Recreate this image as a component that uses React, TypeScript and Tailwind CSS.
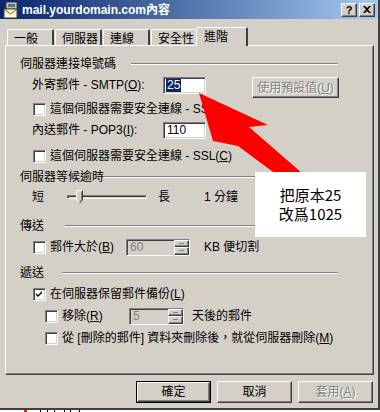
import { ReactNode } from 'react';

const sunken =
    'border border-t-[#808080] border-l-[#808080] border-b-white border-r-white shadow-[inset_1px_1px_0_#404040,inset_-1px_-1px_0_#d4d0c8]';
const raised =
    'border border-t-white border-l-white border-b-[#404040] border-r-[#404040] shadow-[inset_-1px_-1px_0_#808080,inset_1px_1px_0_#d4d0c8]';

const U = ({ children }: { children: ReactNode }) => <span className="underline underline-offset-1">{children}</span>;

const Check = ({ checked = false }: { checked?: boolean }) => (
    <div className={`h-[13px] w-[13px] shrink-0 bg-white ${sunken} flex items-center justify-center`}>
        {checked && (
            <svg width="7" height="7" viewBox="0 0 7 7">
                <path d="M0 2 L2 4 L6 0 L6 2 L2 6 L0 4 Z" fill="#000" />
            </svg>
        )}
    </div>
);

const Header = ({ label, lineStart }: { label: string; lineStart: number }) => (
    <div className="flex h-[16px] items-center pl-[14px]">
        <span className="shrink-0">{label}</span>
        <div className="flex w-full items-center">
            <div style={{ width: lineStart }} className="shrink-0" />
            <div className="h-[2px] flex-1 border-t border-t-[#808080] border-b border-b-white" />
            <div className="w-[35px] shrink-0" />
        </div>
    </div>
);

const Spin = ({ value, width }: { value: string; width: number }) => (
    <div style={{ width }} className={`flex h-[17px] items-stretch bg-[#d4d0c8] ${sunken}`}>
        <span className="flex-1 pl-[3px] leading-[15px] text-[#808080]">{value}</span>
        <div className="flex w-[15px] flex-col">
            {[0, 1].map((i) => (
                <div key={i} className={`flex h-[7.5px] items-center justify-center bg-[#d4d0c8] ${raised}`}>
                    <div className="h-px w-[5px] bg-[#808080]" />
                </div>
            ))}
        </div>
    </div>
);

const Tab = ({ label, active = false }: { label: string; active?: boolean }) =>
    active ? (
        <div className="relative z-10 -mb-px -ml-[2px] flex h-[19px] w-[52px] items-start rounded-t-[2px] border-l border-t border-l-white border-t-white border-r-2 border-r-[#404040] bg-[#d4d0c8] pl-[7px] pt-[1px]">
            {label}
        </div>
    ) : (
        <div className="ml-px flex h-[16px] w-[47px] items-start rounded-t-[2px] border-l border-t border-l-white border-t-white border-r-2 border-r-[#404040] pl-[6px] pt-[1px] first:ml-0">
            {label}
        </div>
    );

const Button = ({ label, main = false, disabled = false }: { label: ReactNode; main?: boolean; disabled?: boolean }) => (
    <div className={`${main ? 'border border-black' : ''} flex h-[22px] w-[75px]`}>
        <div
            className={`flex flex-1 items-center justify-center ${raised} ${
                disabled ? 'text-[#808080] [text-shadow:1px_1px_0_#fff]' : 'text-black'
            }`}
        >
            {label}
        </div>
    </div>
);

export default function App() {
    return (
        <div className="relative h-[412px] w-[380px] overflow-hidden bg-[#d4d0c8] font-['Liberation_Sans','Noto_Sans_CJK_TC',sans-serif] text-[12px] leading-[16px] text-black">
            <div className="h-[410px] border-r-2 border-r-[#404040] border-b-2 border-b-[#404040]">
                {/* title bar */}
                <div className="flex h-[19px] items-center bg-gradient-to-r from-[#0a246a] to-[#a6caf0] pl-[3px] pr-[3px]">
                    <svg width="17" height="16" viewBox="0 0 17 16">
                        <rect x="3" y="0" width="11" height="7" fill="#c0c0c0" stroke="#404040" strokeWidth="1" />
                        <rect x="5" y="2" width="7" height="3" fill="#607080" />
                        <rect x="1" y="7" width="13" height="9" fill="#fffbc8" stroke="#404040" strokeWidth="1" />
                        <path d="M1.5 7.5 L7.5 12 L13.5 7.5" fill="none" stroke="#606060" strokeWidth="1" />
                    </svg>
                    <span className="ml-[2px] font-bold text-white">mail.yourdomain.com內容</span>
                    <div className="flex-1" />
                    <div className={`flex h-[14px] w-[16px] items-center justify-center bg-[#d4d0c8] text-[11px] font-bold ${raised}`}>?</div>
                    <div className={`ml-[2px] flex h-[14px] w-[16px] items-center justify-center bg-[#d4d0c8] ${raised}`}>
                        <svg width="8" height="7" viewBox="0 0 8 7">
                            <path d="M0 0 L2 0 L4 2 L6 0 L8 0 L5 3.5 L8 7 L6 7 L4 5 L2 7 L0 7 L3 3.5 Z" fill="#000" />
                        </svg>
                    </div>
                </div>

                {/* tabs */}
                <div className="mt-[8px] flex h-[18px] items-end pl-[7px]">
                    <Tab label="一般" />
                    <Tab label="伺服器" />
                    <Tab label="連線" />
                    <Tab label="安全性" />
                    <Tab label="進階" active />
                </div>

                {/* panel */}
                <div className="ml-[5px] h-[330px] w-[369px] border border-t-white border-l-white border-b-[#404040] border-r-[#404040] shadow-[inset_-1px_-1px_0_#808080]">
                    <div className="mt-[10px]">
                        <Header label="伺服器連接埠號碼" lineStart={15} />
                    </div>

                    <div className="mt-[5px] flex h-[21px] items-start pl-[26px]">
                        <span className="w-[131px] leading-[17px]">
                            外寄郵件 - SMTP(<U>O</U>):
                        </span>
                        <div className={`flex h-[17px] w-[43px] items-center bg-white pl-[2px] ${sunken}`}>
                            <span className="bg-[#0a246a] px-px leading-[13px] text-white">25</span>
                        </div>
                        <div className="ml-[46px]">
                            <div
                                className={`flex h-[21px] w-[87px] items-center justify-center text-[#808080] [text-shadow:1px_1px_0_#fff] ${raised}`}
                            >
                                使用預設值(<U>U</U>)
                            </div>
                        </div>
                    </div>

                    <div className="mt-[3px] flex h-[16px] items-center gap-[4px] pl-[27px]">
                        <Check />
                        <span>這個伺服器需要安全連線 - SSL</span>
                    </div>

                    <div className="mt-[4px] flex h-[18px] items-center pl-[26px]">
                        <span className="w-[131px]">
                            內送郵件 - POP3(<U>I</U>):
                        </span>
                        <div className={`flex h-[17px] w-[43px] items-center bg-white pl-[3px] ${sunken}`}>110</div>
                    </div>

                    <div className="mt-[9px] flex h-[16px] items-center gap-[4px] pl-[27px]">
                        <Check />
                        <span>
                            這個伺服器需要安全連線 - SSL(<U>C</U>)
                        </span>
                    </div>

                    <div className="mt-[5px]">
                        <Header label="伺服器等候逾時" lineStart={0} />
                    </div>

                    <div className="mt-[4px] flex h-[16px] items-center pl-[26px]">
                        <span className="w-[35px]">短</span>
                        <div className="relative h-[16px] w-[80px]">
                            <div className="absolute left-0 right-0 top-[6px] h-[4px] border-t border-l border-t-[#808080] border-l-[#808080] border-b border-r border-b-white border-r-white shadow-[inset_1px_1px_0_#404040]" />
                            <svg className="absolute left-[9px] top-[1px]" width="7" height="14" viewBox="0 0 7 14">
                                <path d="M0.5 0.5 H6.5 V10 L3.5 13 L0.5 10 Z" fill="#d4d0c8" />
                                <path d="M0.5 10 V0.5 H6" fill="none" stroke="#fff" />
                                <path d="M6.5 0.5 V10 L3.5 13.2" fill="none" stroke="#404040" />
                                <path d="M5.5 1.5 V9.5 L3.5 11.8" fill="none" stroke="#808080" />
                                <path d="M0.5 10 L3 12.5" fill="none" stroke="#fff" />
                            </svg>
                        </div>
                        <span className="ml-[11px] w-[46px]">長</span>
                        <span>1 分鐘</span>
                    </div>

                    <div className="mt-[13px]">
                        <Header label="傳送" lineStart={21} />
                    </div>

                    <div className="mt-[4px] flex h-[18px] items-center pl-[27px]">
                        <Check />
                        <span className="ml-[4px] w-[76px]">
                            郵件大於(<U>B</U>)
                        </span>
                        <Spin value="60" width={64} />
                        <span className="ml-[14px]">KB 便切割</span>
                    </div>

                    <div className="mt-[9px]">
                        <Header label="遞送" lineStart={18} />
                    </div>

                    <div className="mt-[5px] flex h-[16px] items-center gap-[4px] pl-[27px]">
                        <Check checked />
                        <span>
                            在伺服器保留郵件備份(<U>L</U>)
                        </span>
                    </div>

                    <div className="mt-[5px] flex h-[18px] items-center pl-[39px]">
                        <Check />
                        <span className="ml-[4px] w-[67px]">
                            移除(<U>R</U>)
                        </span>
                        <Spin value="5" width={55} />
                        <span className="ml-[8px]">天後的郵件</span>
                    </div>

                    <div className="mt-[5px] flex h-[16px] items-center gap-[4px] pl-[39px]">
                        <Check />
                        <span>
                            從 [刪除的郵件] 資料夾刪除後，就從伺服器刪除(<U>M</U>)
                        </span>
                    </div>
                </div>

                {/* buttons */}
                <div className="mt-[6px] flex justify-end gap-[6px] pr-[5px]">
                    <Button label="確定" main />
                    <Button label="取消" />
                    <Button
                        label={
                            <>
                                套用(<U>A</U>)
                            </>
                        }
                        disabled
                    />
                </div>
            </div>

            {/* bit of the window below */}
            <div className="flex h-[2px] items-start bg-white pl-[24px]">
                <div className="h-[2px] w-[3px] bg-[#e02010]" />
                <div className="ml-[13px] h-[2px] w-px bg-black" />
                <div className="ml-[6px] h-[2px] w-px bg-black" />
                <div className="ml-[6px] h-[2px] w-px bg-black" />
                <div className="ml-[9px] h-[2px] w-px bg-black" />
                <div className="ml-[5px] h-[2px] w-px bg-black" />
                <div className="ml-[8px] h-[2px] w-px bg-black" />
            </div>

            {/* annotation */}
            <svg className="pointer-events-none absolute left-0 top-0" width="380" height="412" viewBox="0 0 380 412">
                <polygon points="199,93 268,125 249,127 310,180 292,186 238,146 213,141" fill="#ff0000" />
            </svg>
            <div className="absolute left-[255px] top-[172px] flex h-[65px] w-[111px] flex-col items-center justify-center gap-px bg-white font-['Noto_Sans_CJK_TC',sans-serif] text-[15px] leading-[18px]">
                <span>把原本25</span>
                <span>改爲1025</span>
            </div>
        </div>
    );
}
